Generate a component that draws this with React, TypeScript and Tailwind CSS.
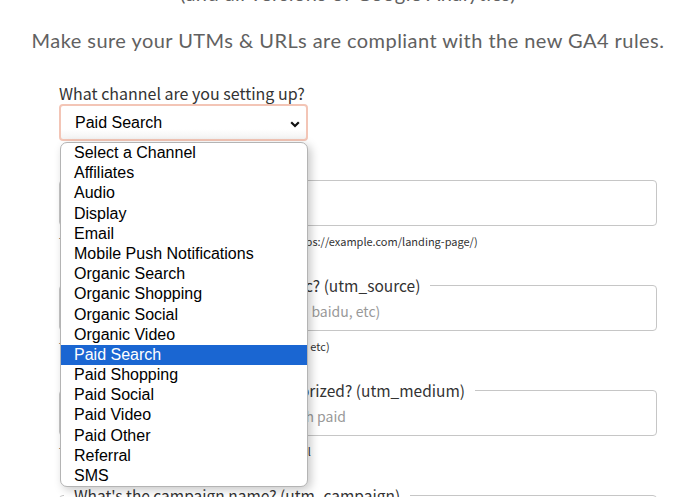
import React from 'react'

const channels = [
    'Select a Channel',
    'Affiliates',
    'Audio',
    'Display',
    'Email',
    'Mobile Push Notifications',
    'Organic Search',
    'Organic Shopping',
    'Organic Social',
    'Organic Video',
    'Paid Search',
    'Paid Shopping',
    'Paid Social',
    'Paid Video',
    'Paid Other',
    'Referral',
    'SMS',
]

const fields = [
    {
        legend: "What's the landing page URL?",
        placeholder: 'https://example.com/landing-page/',
        help: "The full website URL you're sending it to (e.g. https://example.com/landing-page/)",
    },
    {
        legend: 'What website is sending us traffic? (utm_source)',
        placeholder: '(e.g. google, newsletter, twitter, bing, baidu, etc)',
        help: 'The referrer of the traffic (e.g. google, newsletter, etc)',
    },
    {
        legend: 'How should this traffic be categorized? (utm_medium)',
        placeholder: '(e.g. cpc, display, email, social, search paid',
        help: 'The marketing mediums (e.g. cpc, displays, email',
    },
    {
        legend: "What's the campaign name? (utm_campaign)",
        placeholder: '(e.g. spring_sale, launch_2023)',
        help: 'The product, promo code or slogan',
    },
]

const Field = ({ legend, placeholder, help, first }: { legend: string; placeholder: string; help: string; first?: boolean }) => {
    return (
        <div className={first ? 'mt-[29px]' : 'mt-[26px]'}>
            <fieldset className="rounded-[4px] border border-[#c6c6c6] pr-2 pb-[4px] pl-[4px]">
                <legend className="pr-[10px] pl-[10px] text-[15.5px] leading-5 text-[#333]">{legend}</legend>
                <input readOnly className="h-[31px] w-full px-[4px] text-[14px] text-[#333] outline-none placeholder:text-[#999]" placeholder={placeholder} />
            </fieldset>
            <p className="mt-[7px] text-[11px] leading-4 text-[#333]">{help}</p>
        </div>
    )
}

export default function App() {
    return (
        <div className="relative h-[497px] w-full overflow-hidden bg-white" style={{ fontFamily: '"Noto Sans CJK KR", "Noto Sans", sans-serif' }}>
            <p className="-mt-[19px] pl-[13px] text-center text-[20px] leading-6 tracking-[0.45px] text-[#616161]" style={{ fontFamily: 'Lato, sans-serif' }}>
                (and all versions of Google Analytics)
            </p>
            <p className="mt-[23px] pl-[13px] text-center text-[20px] leading-6 tracking-[0.45px] text-[#616161]" style={{ fontFamily: 'Lato, sans-serif' }}>
                Make sure your UTMs &amp; URLs are compliant with the new GA4 rules.
            </p>

            <div className="pr-[26px] pl-[59px]">
                <label className="mt-[31px] block text-[16px] leading-5 text-[#333]">What channel are you setting up?</label>
                <div className="relative mt-px flex h-[37px] w-[249px] items-center rounded-[4px] border-2 border-[#f3c5b6] bg-gradient-to-b from-white from-70% to-[#f3f3f3] pl-[14px]">
                    <span className="pt-px text-[16px] text-black" style={{ fontFamily: '"Liberation Sans", Arial, sans-serif' }}>Paid Search</span>
                    <svg className="absolute top-[15px] right-[6px]" width="10" height="7" viewBox="0 0 10 7">
                        <path d="M1.2 1.2 L5 5 L8.8 1.2" fill="none" stroke="#111" strokeWidth="2.2" />
                    </svg>
                </div>

                {fields.map((f, i) => (
                    <Field key={i} {...f} first={i === 0} />
                ))}
            </div>

            <ul
                className="absolute top-[142px] left-[60px] w-[248px] overflow-hidden rounded-[7px] border border-[#b4b4b4] bg-white shadow-[3px_3px_10px_rgba(0,0,0,0.22)]"
                style={{ fontFamily: '"Liberation Sans", Arial, sans-serif' }}
            >
                {channels.map((c) => (
                    <li key={c} className={`h-[20.2px] pl-[13px] text-[16px] leading-[20.2px] ${c === 'Paid Search' ? 'bg-[#1a66d2] text-white' : 'text-black'}`}>
                        {c}
                    </li>
                ))}
            </ul>
        </div>
    )
}
